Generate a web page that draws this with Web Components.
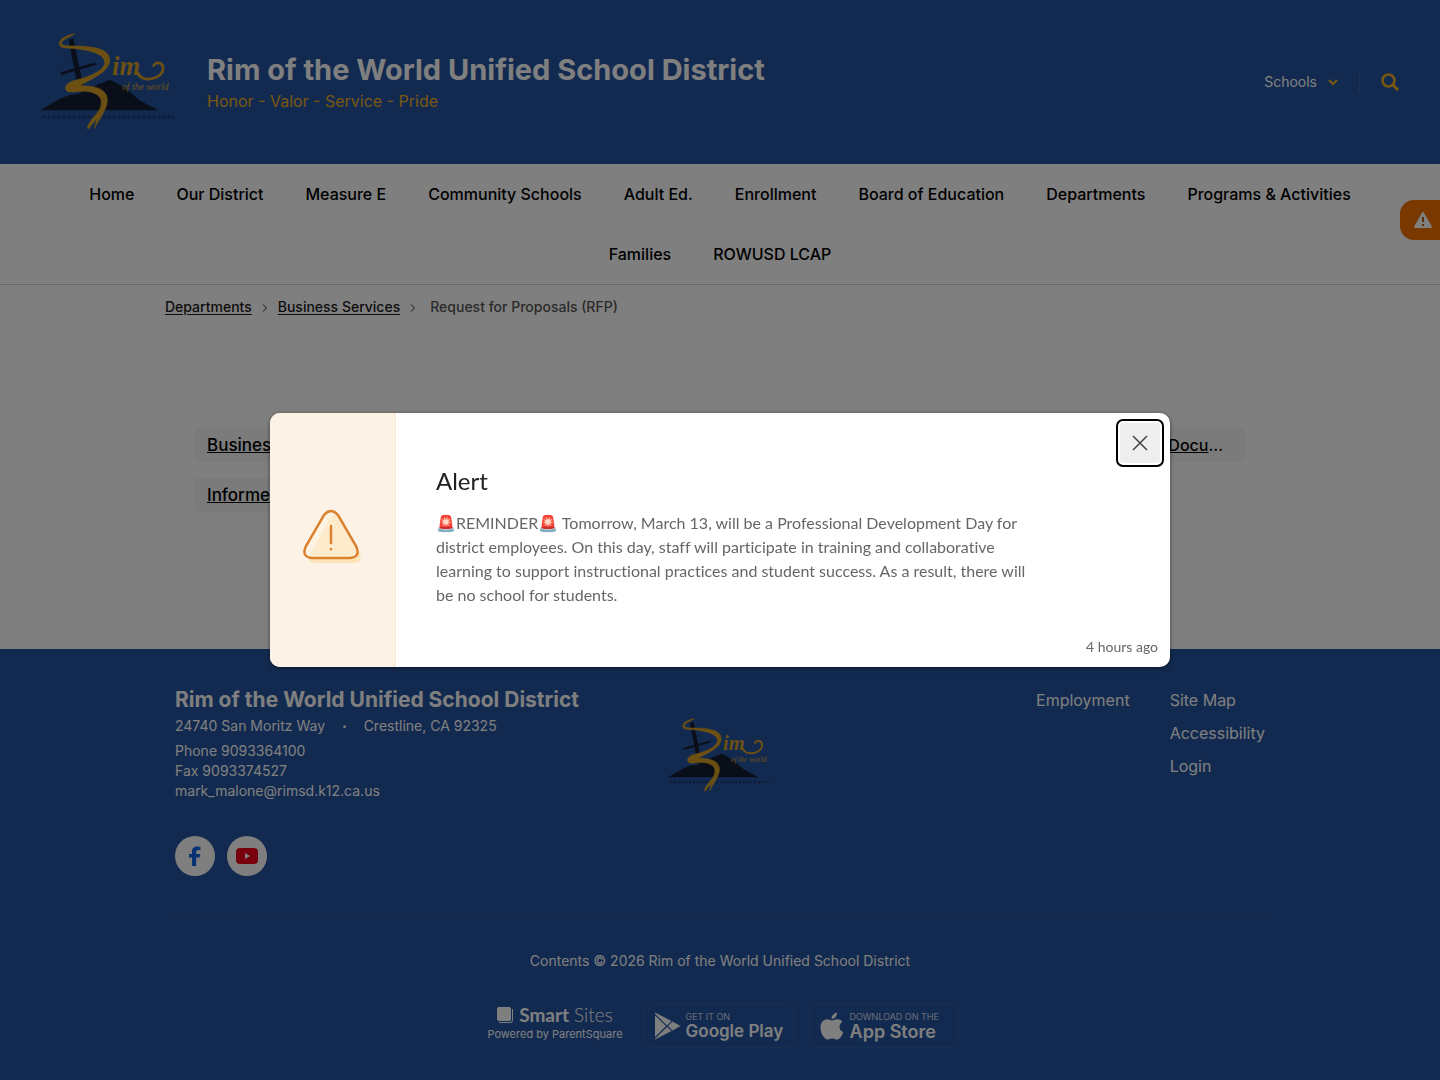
<!DOCTYPE html>
<html lang="en">
<head>
<meta charset="utf-8">
<title>Request for Proposals (RFP) - Rim of the World Unified School District</title>
<style>
  body {
    margin: 0;
    font-family: Inter, "Open Sans", sans-serif;
    font-size: 16px;
    color: #000;
    background: #fff;
    --brand: #2454a0;
    --gold: #f0b020;
    --alert-font: Lato, "Open Sans", sans-serif;
  }
</style>
</head>
<body>
<site-page>
  <site-header slot="header" heading="Rim of the World Unified School District" tagline="Honor - Valor - Service - Pride"></site-header>
  <site-nav slot="nav">
    <a href="#">Home</a>
    <a href="#">Our District</a>
    <a href="#">Measure E</a>
    <a href="#">Community Schools</a>
    <a href="#">Adult Ed.</a>
    <a href="#">Enrollment</a>
    <a href="#">Board of Education</a>
    <a href="#">Departments</a>
    <a href="#">Programs &amp; Activities</a>
    <a href="#">Families</a>
    <a href="#">ROWUSD LCAP</a>
  </site-nav>
  <bread-crumbs>
    <a href="#">Departments</a>
    <a href="#">Business Services</a>
    <span>Request for Proposals (RFP)</span>
  </bread-crumbs>
  <quick-links></quick-links>
  <site-footer slot="footer"></site-footer>
</site-page>
<alert-tab></alert-tab>
<alert-dialog heading="Alert" time="4 hours ago">🚨REMINDER🚨 Tomorrow, March 13, will be a Professional Development Day for district employees. On this day, staff will participate in training and collaborative learning to support instructional practices and student success. As a result, there will be no school for students.</alert-dialog>

<script>
class BaseElement extends HTMLElement {
  connectedCallback() {
    if (this.shadowRoot) {
      return;
    }
    this.attachShadow({ mode: 'open' });
    this.shadowRoot.innerHTML = this.render();
  }
}

class SitePage extends BaseElement {
  render() {
    return /* html */ `
      <style>
        :host { display: flex; flex-direction: column; min-height: 100vh; }
        main { flex: 1; }
      </style>
      <slot name="header"></slot>
      <slot name="nav"></slot>
      <main><slot></slot></main>
      <slot name="footer"></slot>
    `;
  }
}

class DistrictLogo extends BaseElement {
  render() {
    return /* html */ `
      <style>
        :host { display: block; width: 136px; }
        svg { display: block; width: 100%; height: auto; }
        text { font-family: "Liberation Serif", serif; font-style: italic; fill: #d9a026; }
        .rim { font-weight: bold; }
      </style>
      <svg viewBox="30 36 408 294" role="img" aria-label="Rim of the World">
        <path fill="#151d31" d="M30 268 L92 232 L120 222 L150 218 L205 190 L240 176 L282 198 L328 238 L385 268 Z"/>
        <path fill="#151d31" d="M116 56 L130 52 L164 216 L146 214 Z"/>
        <path fill="none" stroke="#151d31" stroke-width="8" d="M92 158 L196 128"/>
        <path fill="none" stroke="#1c3a70" stroke-width="10" stroke-dasharray="8 7" d="M38 288 H432"/>
        <path fill="#d9a026" stroke="#d9a026" stroke-width="2" d="M134 38 C98 45 82 60 90 74 C97 83 112 80 140 83 C183 89 223 99 224 123 C225 148 182 166 137 178 C104 184 101 207 114 212 C132 216 153 207 178 212 C211 218 220 238 211 260 C204 280 179 294 172 322 L178 322 C185 308 193 303 201 292 L193 322 C204 299 232 265 232 238 C232 204 196 194 149 194 C182 174 236 155 239 119 C241 83 189 76 137 75 C100 76 91 72 96 62 C102 53 121 48 134 38 Z"/>
        <text class="rim" x="246" y="161" font-size="80">im</text>
        <path fill="none" stroke="#d9a026" stroke-width="8" stroke-linecap="round" d="M324 156 C334 188 397 174 399 145 C401 124 379 120 371 134"/>
        <text x="276" y="207" font-size="29">of the world</text>
      </svg>
    `;
  }
}

class SiteHeader extends BaseElement {
  render() {
    return /* html */ `
      <style>
        :host { display: flex; align-items: center; gap: 31px; padding: 33px 40px; background: var(--brand); color: #fff; }
        .name { flex: 1; padding-top: 2px; }
        h1 { margin: 0; font-size: 29px; line-height: 36px; font-weight: 700; }
        p { margin: 0; font-size: 16px; line-height: 26px; color: var(--gold); }
        .tools { display: flex; align-items: center; }
        button { display: flex; align-items: center; padding: 0; border: 0; background: none; color: inherit; font: inherit; cursor: pointer; }
        .schools { gap: 10px; font-size: 14px; line-height: 20px; padding-right: 20px; border-right: 1px solid #3a64a8; }
        .search { margin-left: 20px; }
        svg { display: block; color: var(--gold); }
      </style>
      <district-logo></district-logo>
      <div class="name">
        <h1>${this.getAttribute('heading')}</h1>
        <p>${this.getAttribute('tagline')}</p>
      </div>
      <div class="tools">
        <button class="schools" type="button">Schools
          <svg width="12" height="12" viewBox="0 0 12 12" fill="none" stroke="currentColor" stroke-width="2"><path d="M2 4 L6 8 L10 4"/></svg>
        </button>
        <button class="search" type="button" aria-label="Search">
          <svg width="20" height="20" viewBox="0 0 20 20" fill="none" stroke="currentColor"><circle cx="8.500" cy="8.500" r="6" stroke-width="2.500"/><path stroke-width="3" d="M12.500 12.500 L18 18"/></svg>
        </button>
      </div>
    `;
  }
}

class SiteNav extends BaseElement {
  render() {
    return /* html */ `
      <style>
        :host { display: block; border-bottom: 1px solid #cfcfcf; }
        nav { display: flex; flex-wrap: wrap; justify-content: center; column-gap: 42px; padding: 0 60px; }
        ::slotted(a) { color: #000; font-size: 16px; line-height: 60px; font-weight: 500; text-decoration: none; }
      </style>
      <nav><slot></slot></nav>
    `;
  }
}

class BreadCrumbs extends BaseElement {
  render() {
    const items = [...this.children];
    items.forEach((item, i) => { item.slot = `item${i}`; });
    const chevron = '<svg width="6" height="10" viewBox="0 0 6 10" fill="none" stroke="currentColor"><path d="M1 1.500 L4.500 5 L1 8.500"/></svg>';

    return /* html */ `
      <style>
        :host { display: block; max-width: 1110px; margin: 0 auto; padding: 12px 0; font-size: 14px; line-height: 20px; color: #555; }
        nav { display: flex; align-items: center; gap: 10px; }
        svg { margin-top: 2px; color: #222; }
        ::slotted(a) { color: #1a1a1a; font-weight: 500; text-underline-offset: 2px; }
        ::slotted(span) { margin-left: 4px; font-weight: 500; }
      </style>
      <nav aria-label="Breadcrumb">
        ${items.map((item, i) => `<slot name="item${i}"></slot>`).join(chevron)}
      </nav>
    `;
  }
}

class QuickLinks extends BaseElement {
  render() {
    return /* html */ `
      <style>
        :host { display: grid; grid-template-columns: repeat(3, 1fr); gap: 16px 24px; max-width: 1050px; margin: 0 auto; padding: 99px 0 128px; }
        a { padding: 5px 12px; border-radius: 3px; background: #f6f6f6; color: #000; font-size: 17px; line-height: 24px; font-weight: 500; }
        .last { grid-column: 3; padding-right: 22px; font-size: 16px; text-align: right; text-decoration: none; }
      </style>
      <a href="#">Busines</a>
      <a class="last" href="#"><u>Docu</u>…</a>
      <a href="#">Informe</a>
    `;
  }
}

class StoreBadge extends BaseElement {
  render() {
    return /* html */ `
      <style>
        :host { display: block; }
        a { display: flex; align-items: center; gap: 5px; box-sizing: border-box; width: 150px; height: 45px; padding: 0 0 0 9px; border: 1px solid #335f9f; border-radius: 5px; color: #fff; text-decoration: none; }
        small { display: block; font-size: 9px; line-height: 12px; font-weight: 300; }
        b { display: block; font-size: var(--store-size, 17px); line-height: 17px; font-weight: 600; white-space: nowrap; }
      </style>
      <a href="#">
        <slot></slot>
        <span><small>${this.getAttribute('note')}</small><b>${this.getAttribute('store')}</b></span>
      </a>
    `;
  }
}

class SiteFooter extends BaseElement {
  render() {
    return /* html */ `
      <style>
        :host { display: block; padding: 38px 0 32px; background: var(--brand); color: #fff; font-size: 14px; line-height: 20px; }
        .inner { max-width: 1090px; margin: 0 auto; }
        .top { display: grid; grid-template-columns: 1fr auto 1fr; padding-bottom: 42px; border-bottom: 1px solid #3059a0; }
        h2 { margin: 0 0 3px; font-size: 21px; line-height: 26px; font-weight: 700; white-space: nowrap; }
        p { margin: 0; }
        .address { display: flex; gap: 17px; margin-bottom: 5px; }
        .dot { font-size: 8px; }
        a { color: inherit; text-decoration: none; }
        district-logo { width: 104px; margin-top: 31px; }
        .links { display: flex; justify-content: flex-end; gap: 40px; font-size: 16px; }
        ul { list-style: none; margin: 0; padding: 0; }
        li { line-height: 26px; margin-bottom: 7px; }
        .social { display: flex; gap: 12px; margin-top: 35px; }
        .social a { display: grid; place-items: center; width: 40px; height: 40px; border-radius: 50%; background: #fff; }
        .copy { margin: 32px 0; text-align: center; }
        .badges { display: flex; justify-content: center; gap: 15px; padding-left: 6px; }
        .smart { margin-right: 6px; text-align: center; font-size: 11px; line-height: 14px; }
        .logo { display: flex; align-items: center; justify-content: center; gap: 5px; font-size: 19px; line-height: 24px; font-family: var(--alert-font); }
        em { font-style: normal; font-weight: 300; }
        .apple { --store-size: 18px; }
      </style>
      <div class="inner">
        <div class="top">
          <div>
            <h2>Rim of the World Unified School District</h2>
            <p class="address"><span>24740 San Moritz Way</span><span class="dot">•</span><span>Crestline, CA 92325</span></p>
            <p>Phone <a href="#">9093364100</a></p>
            <p>Fax 9093374527</p>
            <p><a href="#">mark_malone@rimsd.k12.ca.us</a></p>
            <div class="social">
              <a href="#" aria-label="Facebook"><svg width="14" height="20" viewBox="0 0 14 20"><path fill="#0f66e8" d="M4 20 V11.500 H1 V8 H4 V5.500 C4 2 6 0.500 9 0.500 L12.500 0.800 V4 H10.500 C8.800 4 8.200 4.700 8.200 6 V8 H12.300 L11.600 11.500 H8.200 V20 Z"/></svg></a>
              <a href="#" aria-label="YouTube"><svg width="22" height="16" viewBox="0 0 22 16"><rect width="22" height="16" rx="4" fill="#f00018"/><path fill="#fff" d="M9 5 L14 8 L9 11 Z"/></svg></a>
            </div>
          </div>
          <district-logo></district-logo>
          <div class="links">
            <ul><li><a href="#">Employment</a></li></ul>
            <ul>
              <li><a href="#">Site Map</a></li>
              <li><a href="#">Accessibility</a></li>
              <li><a href="#">Login</a></li>
            </ul>
          </div>
        </div>
        <p class="copy">Contents © 2026 Rim of the World Unified School District</p>
        <div class="badges">
          <a class="smart" href="#">
            <span class="logo"><svg width="17" height="17" viewBox="0 0 17 17"><rect width="14" height="14" rx="2" fill="#fff"/><path fill="none" stroke="#fff" d="M15.500 2 V13 Q15.500 15.500 13 15.500 H2"/></svg><span><b>Smart</b> <em>Sites</em></span></span>
            Powered by ParentSquare
          </a>
          <store-badge note="GET IT ON" store="Google Play">
            <svg width="27" height="28" viewBox="0 0 27 28"><path fill="#fff" d="M1 0.500 L17.500 9 L13 13.500 L1 1.800 Z M1 3.500 L12 14 L1 25 Z M18.500 9.500 L26.500 14 L18.500 18.500 L14 14 Z M13 15 L17.500 19 L1 27.500 V26.800 Z"/></svg>
          </store-badge>
          <store-badge class="apple" note="DOWNLOAD ON THE" store="App Store">
            <svg width="26" height="28" viewBox="0 0 26 28"><path fill="#fff" d="M18 0.500 C18.300 4 15.500 7 12.500 7 C12.300 3.800 15 1 18 0.500 Z M12.800 8.500 C14.500 8.500 16 7.200 18.500 7.200 C20.800 7.200 22.600 8.500 23.500 9.800 C19 12.500 19.800 18.500 24.300 20.200 C23 23.800 20.500 27.500 17.800 27.500 C16 27.500 15.400 26.400 13.200 26.400 C11 26.400 10.200 27.500 8.500 27.500 C5.500 27.500 1.500 21.500 1.500 15.500 C1.500 10 5 7.200 8.300 7.200 C10.500 7.200 12 8.500 12.800 8.500 Z"/></svg>
          </store-badge>
        </div>
      </div>
    `;
  }
}

class AlertTab extends BaseElement {
  render() {
    return /* html */ `
      <style>
        :host { position: fixed; top: 200px; right: 0; }
        button { display: grid; place-items: center; width: 40px; height: 40px; padding: 0 0 0 6px; border: 0; border-radius: 14px 0 0 14px; background: #f07000; }
      </style>
      <button type="button" aria-label="Show alert">
        <svg width="20" height="18" viewBox="0 0 20 18"><path fill="#fff" stroke="#fff" stroke-width="2" stroke-linejoin="round" d="M10 2 L18 16 H2 Z"/><path stroke="#b85b00" stroke-width="2" d="M10 6 V11 M10 13 V15"/></svg>
      </button>
    `;
  }
}

class AlertDialog extends BaseElement {
  render() {
    return /* html */ `
      <style>
        :host { position: fixed; inset: 0; display: flex; align-items: center; justify-content: center; background: rgb(0 0 0 / 50%); font-family: var(--alert-font); font-variant-ligatures: none; }
        .dialog { position: relative; display: grid; grid-template-columns: 126px 1fr; box-sizing: border-box; width: 900px; max-width: 90%; border-radius: 10px; overflow: hidden; background: #fff; box-shadow: 0 1px 4px rgb(0 0 0 / 50%); }
        .icon { display: grid; place-items: center; background: #fcf2e6; border-right: 1px solid #f9ebcf; }
        .body { padding: 53px 12px 10px 40px; }
        h2 { margin: 0 0 15px; font-size: 24px; line-height: 30px; font-weight: 400; color: #222; }
        p { margin: 0 0 30px; max-width: 600px; font-size: 16px; line-height: 24px; color: #666; }
        time { display: block; text-align: right; font-size: 14px; line-height: 20px; color: #666; }
        button { position: absolute; top: 10px; right: 10px; display: grid; place-items: center; width: 40px; height: 40px; padding: 0; border: 0; border-radius: 3px; background: #eee; outline: 2px solid #000; outline-offset: 2px; cursor: pointer; }
      </style>
      <div class="dialog" role="alertdialog" aria-modal="true" aria-labelledby="title">
        <div class="icon">
          <svg width="62" height="62" viewBox="0 0 62 62" fill="none">
            <path fill="#fde3b8" d="M28 9 Q33 2 38 9 L58 43 Q61 53 53 54 H13 Q5 54 8 46 Z"/>
            <path fill="#fff3e0" fill-opacity=".5" stroke="#d9822f" stroke-width="2.500" d="M22 6 Q29 -2 36 6 L54 37 Q59 48 48 49 H10 Q-1 48 4 37 Z"/>
            <path stroke="#d9822f" stroke-width="2.500" stroke-linecap="round" d="M29 17 V34 M29 40 V40.200"/>
          </svg>
        </div>
        <div class="body">
          <h2 id="title">${this.getAttribute('heading')}</h2>
          <p><slot></slot></p>
          <time>${this.getAttribute('time')}</time>
        </div>
        <button type="button" aria-label="Close">
          <svg width="16" height="16" viewBox="0 0 16 16" stroke="#444" stroke-width="1.500"><path d="M1 1 L15 15 M15 1 L1 15"/></svg>
        </button>
      </div>
    `;
  }
}

customElements.define('district-logo', DistrictLogo);
customElements.define('store-badge', StoreBadge);
customElements.define('site-page', SitePage);
customElements.define('site-header', SiteHeader);
customElements.define('site-nav', SiteNav);
customElements.define('bread-crumbs', BreadCrumbs);
customElements.define('quick-links', QuickLinks);
customElements.define('site-footer', SiteFooter);
customElements.define('alert-tab', AlertTab);
customElements.define('alert-dialog', AlertDialog);
</script>
</body>
</html>
